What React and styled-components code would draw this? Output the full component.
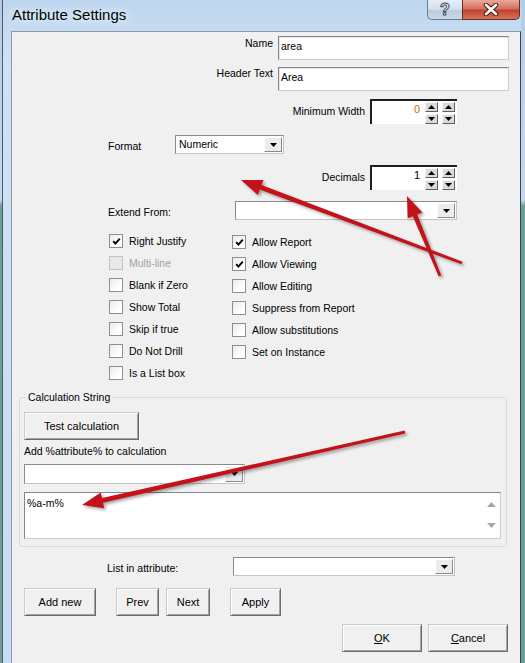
import React from "react";
import styled, { createGlobalStyle } from "styled-components";

const GlobalStyle = createGlobalStyle`
  html, body {
    margin: 0;
    padding: 0;
  }
  body {
    font-family: "Liberation Sans", Arial, sans-serif;
    font-size: 10.5px;
    color: #000;
  }
`;

const arrows = [
  { from: [462, 263], to: [241, 180] },
  { from: [440, 276], to: [407, 196] },
  { from: [405, 432], to: [82, 505] },
];

// tapered shaft + head as one polygon
const arrowPoints = ({ from, to }) => {
  const [x1, y1] = from;
  const [x2, y2] = to;
  const len = Math.hypot(x2 - x1, y2 - y1);
  const ux = (x2 - x1) / len;
  const uy = (y2 - y1) / len;
  const nx = -uy;
  const ny = ux;
  const head = 21;
  const hw = 8;
  const tw = 1.4;
  const bw = 2.4;
  const bx = x2 - ux * head;
  const by = y2 - uy * head;
  const pts = [
    [x1 + nx * tw, y1 + ny * tw],
    [bx + nx * bw, by + ny * bw],
    [bx + nx * hw, by + ny * hw],
    [x2, y2],
    [bx - nx * hw, by - ny * hw],
    [bx - nx * bw, by - ny * bw],
    [x1 - nx * tw, y1 - ny * tw],
  ];
  return pts.map((p) => p.map((v) => v.toFixed(1)).join(",")).join(" ");
};

const Caret = ({ up, color = "#000" }) => (
  <svg width="7" height="4" viewBox="0 0 7 4">
    <polygon points={up ? "0,4 3.5,0 7,4" : "0,0 7,0 3.5,4"} fill={color} />
  </svg>
);

const Check = () => (
  <svg width="9" height="9" viewBox="0 0 9 9">
    <polyline
      points="1.2,4.2 3.4,6.6 7.8,1.6"
      fill="none"
      stroke="#000"
      strokeWidth="1.9"
    />
  </svg>
);

const SpinField = ({ value, color }) => (
  <Spin>
    <SpinValue $color={color}>{value}</SpinValue>
    <SpinCol>
      <SpinBtn>
        <Caret up />
      </SpinBtn>
      <SpinBtn>
        <Caret />
      </SpinBtn>
    </SpinCol>
    <SpinCol>
      <SpinBtn>
        <Caret up />
      </SpinBtn>
      <SpinBtn>
        <Caret />
      </SpinBtn>
    </SpinCol>
  </Spin>
);

const Combo = ({ width, height = 19, text }) => (
  <Select $w={width} $h={height}>
    <SelectText>{text}</SelectText>
    <SelectButton>
      <Caret />
    </SelectButton>
  </Select>
);

const leftChecks = [
  { label: "Right Justify", checked: true },
  { label: "Multi-line", disabled: true },
  { label: "Blank if Zero" },
  { label: "Show Total" },
  { label: "Skip if true" },
  { label: "Do Not Drill" },
  { label: "Is a List box" },
];

const rightChecks = [
  { label: "Allow Report", checked: true },
  { label: "Allow Viewing", checked: true },
  { label: "Allow Editing" },
  { label: "Suppress from Report" },
  { label: "Allow substitutions" },
  { label: "Set on Instance" },
];

const CheckItem = ({ label, checked, disabled }) => (
  <CheckRow>
    <Box $disabled={disabled}>{checked && <Check />}</Box>
    <CheckLabel $disabled={disabled}>{label}</CheckLabel>
  </CheckRow>
);

const App = () => {
  return (
    <Desktop>
      <GlobalStyle />
      <Window>
        <TitleBar>
          <Title>Attribute Settings</Title>
          <CaptionButtons>
            <HelpButton>?</HelpButton>
            <CloseButton>
              <svg width="18" height="13" viewBox="0 0 18 13">
                <path
                  d="M4 2 L14 11 M14 2 L4 11"
                  stroke="#4a1a12"
                  strokeWidth="4.6"
                  strokeLinecap="round"
                />
                <path
                  d="M4 2 L14 11 M14 2 L4 11"
                  stroke="#fff"
                  strokeWidth="2.6"
                  strokeLinecap="round"
                />
              </svg>
            </CloseButton>
          </CaptionButtons>
        </TitleBar>

        <Client>
          <Row $top={4} $justify="flex-end" $padRight={11}>
            <Label $dy={0} $gap={5}>
              Name
            </Label>
            <TextInput $w={231}>area</TextInput>
          </Row>
          <Row $top={7} $justify="flex-end" $padRight={11}>
            <Label $dy={-1} $gap={5}>
              Header Text
            </Label>
            <TextInput $w={231}>Area</TextInput>
          </Row>
          <Row $top={8} $justify="flex-end" $padRight={63}>
            <Label $dy={5} $gap={5}>
              Minimum Width
            </Label>
            <SpinField value="0" color="#d06a00" />
          </Row>
          <Row $top={11} $padLeft={96}>
            <Label $dy={4} $w={67} $align="left">
              Format
            </Label>
            <Combo width={109} text="Numeric" />
          </Row>
          <Row $top={11} $justify="flex-end" $padRight={63}>
            <Label $dy={5} $gap={5}>
              Decimals
            </Label>
            <SpinField value="1" color="#000" />
          </Row>
          <Row $top={11} $padLeft={96}>
            <Label $dy={4} $w={127} $align="left">
              Extend From:
            </Label>
            <Combo width={222} />
          </Row>

          <CheckGrid>
            <CheckCol>
              {leftChecks.map((c) => (
                <CheckItem key={c.label} {...c} />
              ))}
            </CheckCol>
            <CheckCol $offset={1}>
              {rightChecks.map((c) => (
                <CheckItem key={c.label} {...c} />
              ))}
            </CheckCol>
          </CheckGrid>

          <Group>
            <Legend>Calculation String</Legend>
            <Button $w={115} $h={28}>
              Test calculation
            </Button>
            <GroupLabel>Add %attribute% to calculation</GroupLabel>
            <ComboWrap>
              <Combo width={221} height={20} />
            </ComboWrap>
            <Memo>
              <MemoText>%a-m%</MemoText>
              <ScrollCol>
                <Caret up color="#a5a5a5" />
                <Caret color="#a5a5a5" />
              </ScrollCol>
            </Memo>
          </Group>

          <Row $top={10} $padLeft={95}>
            <Label $dy={4} $w={126} $align="left">
              List in attribute:
            </Label>
            <Combo width={222} />
          </Row>
          <Row $top={12} $padLeft={12}>
            <Button $w={72} $h={28}>
              Add new
            </Button>
            <Button $w={43} $h={28} $ml={20}>
              Prev
            </Button>
            <Button $w={44} $h={28} $ml={7}>
              Next
            </Button>
            <Button $w={51} $h={28} $ml={20}>
              Apply
            </Button>
          </Row>
          <Row $top={8} $justify="flex-end" $padRight={12}>
            <Button $w={80} $h={28}>
              <u>O</u>K
            </Button>
            <Button $w={80} $h={28} $ml={6}>
              <u>C</u>ancel
            </Button>
          </Row>
        </Client>
      </Window>

      <ArrowLayer width="525" height="663" viewBox="0 0 525 663">
        {arrows.map((a, i) => (
          <polygon key={i} points={arrowPoints(a)} fill="#c3121a" />
        ))}
      </ArrowLayer>
    </Desktop>
  );
};

const Desktop = styled.div`
  position: relative;
  width: 525px;
  height: 663px;
  overflow: hidden;
  display: flex;
  background: linear-gradient(
    to bottom,
    #b4cde6 0,
    #c3d9ee 200px,
    #6d9d94 206px,
    #6d9d94 100%
  );
`;

const Window = styled.div`
  margin-left: 2px;
  width: 519px;
  height: 663px;
  flex: none;
  box-sizing: border-box;
  border-left: 1px solid #4e5a66;
  padding-left: 8px;
  display: flex;
  flex-direction: column;
  background: linear-gradient(to bottom, #bdd5ee, #cfe2f5 60px, #c6dcf2);
`;

const TitleBar = styled.div`
  height: 31px;
  flex: none;
  display: flex;
  justify-content: space-between;
  align-items: flex-start;
`;

const Title = styled.div`
  padding: 6px 0 0 1px;
  font-size: 15px;
  line-height: 18px;
  color: #000;
  text-shadow: 0 0 6px #e6f1fc, 0 0 10px #e6f1fc;
`;

const CaptionButtons = styled.div`
  display: flex;
  margin-right: 1px;
`;

const HelpButton = styled.div`
  width: 35px;
  height: 20px;
  box-sizing: border-box;
  border: 1px solid #6b7b8e;
  border-top: none;
  border-right: none;
  border-radius: 0 0 0 5px;
  background: linear-gradient(to bottom, #e6eef7, #d2deeb 50%, #bccbdc 51%, #c9d7e6);
  display: flex;
  justify-content: center;
  align-items: center;
  font-family: "Liberation Sans", Arial, sans-serif;
  font-weight: bold;
  font-size: 16px;
  color: #fff;
  -webkit-text-stroke: 1px #3c4c62;
`;

const CloseButton = styled.div`
  width: 58px;
  height: 20px;
  box-sizing: border-box;
  border: 1px solid #6d2b20;
  border-top: none;
  border-radius: 0 0 5px 0;
  background: linear-gradient(to bottom, #e9a99c, #d46e5a 48%, #c2412a 52%, #d5735d);
  display: flex;
  justify-content: center;
  align-items: center;
`;

const Client = styled.div`
  flex: 1;
  min-height: 0;
  box-sizing: border-box;
  border: 1px solid #8d9aa8;
  border-right-color: #3a444e;
  border-bottom: none;
  background: #f0f0f0;
  display: flex;
  flex-direction: column;
`;

const Row = styled.div`
  display: flex;
  align-items: flex-start;
  justify-content: ${(p) => p.$justify || "flex-start"};
  margin-top: ${(p) => p.$top || 0}px;
  padding-left: ${(p) => p.$padLeft || 0}px;
  padding-right: ${(p) => p.$padRight || 0}px;
`;

const Label = styled.div`
  margin-top: ${(p) => p.$dy || 0}px;
  margin-right: ${(p) => p.$gap || 0}px;
  width: ${(p) => (p.$w ? `${p.$w}px` : "auto")};
  flex: none;
  text-align: ${(p) => p.$align || "right"};
  line-height: 14px;
  white-space: nowrap;
`;

const TextInput = styled.div`
  width: ${(p) => p.$w}px;
  height: 24px;
  box-sizing: border-box;
  padding: 2px 2px;
  line-height: 14px;
  background: #fff;
  border: 1px solid;
  border-color: #7f8891 #c9ced3 #c9ced3 #7f8891;
  box-shadow: inset 1px 1px 0 #e4e4e4;
`;

const Spin = styled.div`
  width: 87px;
  height: 25px;
  box-sizing: border-box;
  display: flex;
  background: #fff;
  border-left: 2px solid #1e1e1e;
  border-top: 2px solid #1e1e1e;
  padding: 1px 2px 0 0;
  gap: 4px;
`;

const SpinValue = styled.div`
  flex: 1;
  text-align: right;
  font-size: 11px;
  line-height: 13px;
  padding-top: 1px;
  padding-right: 1px;
  color: ${(p) => p.$color};
`;

const SpinCol = styled.div`
  width: 13px;
  display: flex;
  flex-direction: column;
  gap: 2px;
`;

const SpinBtn = styled.div`
  height: 10px;
  box-sizing: border-box;
  background: #dadada;
  border: 1px solid;
  border-color: #f6f6f6 #5e5e5e #5e5e5e #f6f6f6;
  display: flex;
  justify-content: center;
  align-items: center;
`;

const Select = styled.div`
  width: ${(p) => p.$w}px;
  height: ${(p) => p.$h}px;
  flex: none;
  box-sizing: border-box;
  display: flex;
  background: #fff;
  border: 1px solid;
  border-color: #8b8b8b #c4c4c4 #c4c4c4 #8b8b8b;
  padding: 1px;
`;

const SelectText = styled.div`
  flex: 1;
  padding: 1px 2px;
  line-height: 13px;
`;

const SelectButton = styled.div`
  width: 18px;
  flex: none;
  box-sizing: border-box;
  background: #ececec;
  border: 1px solid;
  border-color: #fdfdfd #8a8a8a #8a8a8a #fdfdfd;
  display: flex;
  justify-content: center;
  align-items: center;
`;

const CheckGrid = styled.div`
  display: flex;
  margin-top: 10px;
  padding-left: 97px;
`;

const CheckCol = styled.div`
  width: 123px;
  padding-top: ${(p) => p.$offset || 0}px;
  display: flex;
  flex-direction: column;
`;

const CheckRow = styled.div`
  height: 22px;
  display: flex;
  align-items: center;
`;

const Box = styled.div`
  width: 14px;
  height: 14px;
  flex: none;
  box-sizing: border-box;
  border: 1px solid ${(p) => (p.$disabled ? "#c2c2c2" : "#8e8f8f")};
  background: ${(p) =>
    p.$disabled ? "#e8e8e8" : "linear-gradient(135deg, #e9e9e9, #ffffff 70%)"};
  display: flex;
  justify-content: center;
  align-items: center;
`;

const CheckLabel = styled.span`
  margin-left: 6px;
  line-height: 14px;
  white-space: nowrap;
  color: ${(p) => (p.$disabled ? "#a3a3a3" : "#000")};
`;

const Group = styled.fieldset`
  margin: 6px 13px 0 7px;
  padding: 8px 5px 7px 4px;
  min-width: 0;
  border: 1px solid #d2dbe2;
  border-radius: 3px;
  display: flex;
  flex-direction: column;
  align-items: flex-start;
`;

const Legend = styled.legend`
  margin-left: 2px;
  padding: 0 2px;
  line-height: 14px;
  font-size: 10.5px;
`;

const Button = styled.div`
  width: ${(p) => p.$w}px;
  height: ${(p) => p.$h}px;
  margin-left: ${(p) => p.$ml || 0}px;
  flex: none;
  box-sizing: border-box;
  display: flex;
  justify-content: center;
  align-items: center;
  background: #f0f0f0;
  border: 1px solid;
  border-color: #c9c9c9 #6b6b6b #6b6b6b #c9c9c9;
  box-shadow: inset 1px 1px 0 #ffffff, inset -1px -1px 0 #a3a3a3;
  font-size: 11px;
  white-space: nowrap;
`;

const GroupLabel = styled.div`
  margin-top: 4px;
  line-height: 14px;
  white-space: nowrap;
`;

const ComboWrap = styled.div`
  margin-top: 6px;
`;

const Memo = styled.div`
  margin-top: 8px;
  width: 100%;
  height: 47px;
  box-sizing: border-box;
  display: flex;
  background: #fff;
  border: 1px solid;
  border-color: #7f8891 #c9ced3 #c9ced3 #7f8891;
`;

const MemoText = styled.div`
  flex: 1;
  padding: 3px 2px;
  line-height: 14px;
`;

const ScrollCol = styled.div`
  width: 17px;
  flex: none;
  display: flex;
  flex-direction: column;
  justify-content: space-between;
  align-items: center;
  padding: 9px 0 10px;
  box-sizing: border-box;
  svg {
    width: 9px;
    height: 5px;
  }
`;

const ArrowLayer = styled.svg`
  position: absolute;
  top: 0;
  left: 0;
  pointer-events: none;
  filter: drop-shadow(2px 2px 1.5px rgba(0, 0, 0, 0.35));
`;

export default App;
